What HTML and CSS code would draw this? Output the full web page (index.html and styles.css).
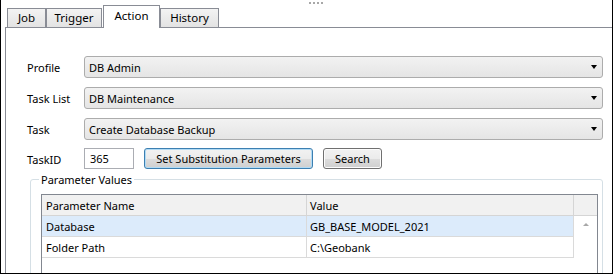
FILE: index.html
```html
<!DOCTYPE html>
<html>
<head>
<meta charset="utf-8">
<link rel="stylesheet" href="styles.css">
</head>
<body>
<div class="window">
  <div class="grip"><span></span><span></span><span></span><span></span></div>
  <div class="tabs">
    <div class="tab tab--job">Job</div>
    <div class="tab tab--trigger">Trigger</div>
    <div class="tab tab--action tab--active">Action</div>
    <div class="tab tab--history">History</div>
  </div>
  <div class="panel">
    <div class="form">
      <div class="label">Profile</div>
      <div class="select"><span>DB Admin</span><span class="arrow"></span></div>
      <div class="label">Task List</div>
      <div class="select"><span>DB Maintenance</span><span class="arrow"></span></div>
      <div class="label">Task</div>
      <div class="select"><span>Create Database Backup</span><span class="arrow"></span></div>
      <div class="label">TaskID</div>
      <div class="idrow">
        <div class="input">365</div>
        <button class="btn btn--default">Set Substitution Parameters</button>
        <button class="btn btn--search">Search</button>
      </div>
    </div>
    <fieldset class="group">
      <legend>Parameter Values</legend>
      <div class="grid">
        <div class="hd hd--name">Parameter Name</div>
        <div class="hd hd--value">Value</div>
        <div class="hd hd--scroll"></div>
        <div class="cell cell--name cell--sel">Database</div>
        <div class="cell cell--value cell--sel">GB_BASE_MODEL_2021</div>
        <div class="scroll"><span class="scroll-up"></span></div>
        <div class="cell cell--name">Folder Path</div>
        <div class="cell cell--value">C:\Geobank</div>
      </div>
    </fieldset>
  </div>
</div>
</body>
</html>
```
FILE: styles.css
```css
* { box-sizing: border-box; }
html, body { margin: 0; padding: 0; background: #fff; }
body {
  font-family: "Noto Sans", "Open Sans", sans-serif;
  font-size: 11px;
  color: #000;
}
.window {
  position: relative;
  width: 613px;
  height: 274px;
  border: 1px solid #000;
  border-top: none;
  overflow: hidden;
  display: flex;
  flex-direction: column;
  background: #fff;
}
.grip {
  position: absolute;
  top: 2px;
  left: 308px;
  display: flex;
  gap: 2px;
}
.grip span { width: 2px; height: 2px; background: #a8a8a8; }

.tabs {
  flex: none;
  height: 27px;
  display: flex;
  align-items: flex-end;
  padding-left: 6px;
}
.tab {
  height: 19px;
  border: 1px solid #898c95;
  border-bottom: none;
  background: linear-gradient(#f3f3f3, #e3e3e3);
  display: flex;
  align-items: center;
  justify-content: center;
  line-height: 1;
  font-size: 11.5px;
}
.tab--job { width: 39px; }
.tab--trigger { width: 56px; }
.tab--action { width: 57px; margin-left: 1px; }
.tab--history { width: 59px; }
.tab--active {
  position: relative;
  z-index: 1;
  height: 23px;
  margin-bottom: -1px;
  background: #fff;
  padding-bottom: 3px;
}

.panel {
  flex: 1;
  min-height: 0;
  margin-left: 4px;
  border-top: 1px solid #898c95;
  border-left: 1px solid #898c95;
  overflow: hidden;
}
.form {
  display: grid;
  grid-template-columns: 57px 1fr;
  row-gap: 9px;
  align-items: center;
  padding: 28px 9px 0 21px;
}
.select {
  height: 22px;
  border: 1px solid #acacac;
  border-radius: 3px;
  background: linear-gradient(#f2f2f2, #e5e5e5);
  display: flex;
  align-items: center;
  justify-content: space-between;
  padding: 0 5px 0 4px;
}
.arrow {
  width: 0;
  height: 0;
  border-left: 3.5px solid transparent;
  border-right: 3.5px solid transparent;
  border-top: 4px solid #000;
}
.idrow {
  display: flex;
  align-items: center;
  gap: 10px;
  margin-top: -1px;
}
.input {
  width: 50px;
  height: 21px;
  border: 1px solid #abadb3;
  background: #fff;
  padding-left: 5px;
  display: flex;
  align-items: center;
}
.btn {
  height: 21px;
  padding: 0;
  font: inherit;
  color: #000;
  border: 1px solid #707070;
  border-radius: 3px;
  background: linear-gradient(#f2f2f2 0%, #ebebeb 50%, #dddddd 50%, #cfcfcf 100%);
  box-shadow: inset 0 0 0 1px #fcfcfc;
}
.btn--default {
  width: 169px;
  border-color: #3c7fb1;
  box-shadow: inset 0 0 0 1px #b1dbf5;
}
.btn--search { width: 59px; }

.group {
  margin: 3px 9px 0 24px;
  padding: 0 4px 0 10px;
  border: 1px solid #d5dfe5;
  border-radius: 3px;
  min-width: 0;
}
.group legend {
  margin-left: -2px;
  padding: 0 2px;
  line-height: 15px;
}
.grid {
  margin-top: 7px;
  height: 110px;
  border: 1px solid #828790;
  display: grid;
  grid-template-columns: 265px 267px 1fr;
  grid-template-rows: 21px 21px 21px 1fr;
}
.hd {
  background: #f1f1f1;
  border-bottom: 1px solid #d5d5d5;
  border-right: 1px solid #d5d5d5;
  display: flex;
  align-items: center;
}
.hd--name { padding-left: 4px; }
.hd--value { padding-left: 3px; }
.hd--scroll { border-right: none; }
.cell {
  border-bottom: 1px solid #dadada;
  display: flex;
  align-items: center;
  white-space: nowrap;
}
.cell--name { padding-left: 4px; border-right: 1px solid #dadada; }
.cell--value { padding-left: 3px; border-right: 1px solid #dadada; }
.cell--sel { background: #dcebfb; }
.scroll {
  grid-column: 3;
  grid-row: 2 / -1;
  display: flex;
  justify-content: center;
  padding-top: 7px;
}
.scroll-up {
  width: 0;
  height: 0;
  border-left: 3px solid transparent;
  border-right: 3px solid transparent;
  border-bottom: 3px solid #a8a8a8;
}
```
